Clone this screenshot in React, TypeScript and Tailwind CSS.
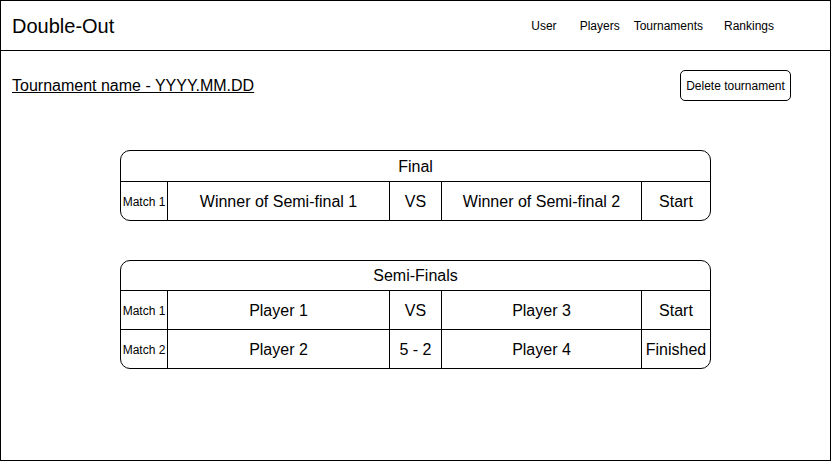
import React from "react";

const NAV = [
  { label: "User", cls: "ml-0" },
  { label: "Players", cls: "ml-[23px]" },
  { label: "Tournaments", cls: "ml-[14px]" },
  { label: "Rankings", cls: "ml-[21px]" },
];

type Match = { label: string; a: string; mid: string; b: string; action: string };

const ROUNDS: { title: string; head: string; matches: Match[] }[] = [
  {
    title: "Final",
    head: "h-[31px]",
    matches: [{ label: "Match 1", a: "Winner of Semi-final 1", mid: "VS", b: "Winner of Semi-final 2", action: "Start" }],
  },
  {
    title: "Semi-Finals",
    head: "h-[30px]",
    matches: [
      { label: "Match 1", a: "Player 1", mid: "VS", b: "Player 3", action: "Start" },
      { label: "Match 2", a: "Player 2", mid: "5 - 2", b: "Player 4", action: "Finished" },
    ],
  },
];

function RoundTable({ title, head, matches }: { title: string; head: string; matches: Match[] }) {
  return (
    <div className="w-[591px] border border-black rounded-[10px] overflow-hidden">
      <div className={`${head} border-b border-black flex items-center justify-center text-[16px] pt-px`}>{title}</div>
      {matches.map((m, i) => (
        <div
          key={i}
          className={`grid grid-cols-[47px_222px_52px_200px_1fr] text-[16px] ${
            i > 0 ? "border-t border-black h-[39px]" : "h-[38px]"
          }`}
        >
          <div className="border-r border-black flex items-center justify-center text-[12px] pt-px">{m.label}</div>
          <div className="border-r border-black flex items-center justify-center pt-px">{m.a}</div>
          <div className="border-r border-black flex items-center justify-center pt-px">{m.mid}</div>
          <div className="border-r border-black flex items-center justify-center pt-px">{m.b}</div>
          <div className="flex items-center justify-center pt-px">{m.action}</div>
        </div>
      ))}
    </div>
  );
}

export default function App() {
  return (
    <div className="w-[831px] h-[461px] border border-black bg-white text-black font-['Liberation_Sans',Arial,sans-serif] flex flex-col">
      <header className="h-[50px] border-b border-black flex items-center px-[11px]">
        <h1 className="text-[20px]">Double-Out</h1>
        <nav className="ml-[417px] flex items-center text-[12px]">
          {NAV.map((n) => (
            <span key={n.label} className={n.cls}>
              {n.label}
            </span>
          ))}
        </nav>
      </header>

      <div className="pl-[11px] pr-[39px] pt-[19px] flex items-center justify-between">
        <span className="text-[16px] underline">Tournament name - YYYY.MM.DD</span>
        <button className="h-[31px] w-[111px] border border-black rounded-[5px] text-[12px]">Delete tournament</button>
      </div>

      <div className="mt-[49px] flex flex-col items-center gap-[39px]">
        {ROUNDS.map((r) => (
          <RoundTable key={r.title} title={r.title} head={r.head} matches={r.matches} />
        ))}
      </div>
    </div>
  );
}
